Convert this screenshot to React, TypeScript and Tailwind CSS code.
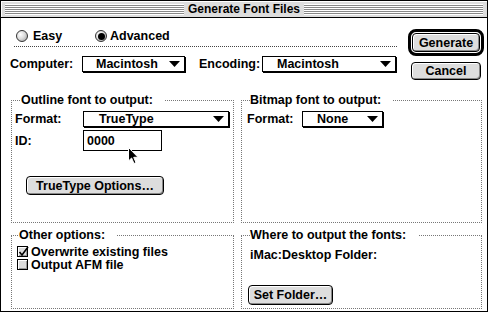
import React from "react";

function Radio({ checked }: { checked?: boolean }) {
  return (
    <span className="w-[12px] h-[12px] rounded-full border border-[#333] bg-[radial-gradient(circle_at_35%_35%,#fff_0,#ddd_45%,#999_100%)] flex items-center justify-center">
      {checked && <span className="w-[7px] h-[7px] rounded-full bg-black" />}
    </span>
  );
}

function Checkbox({ checked }: { checked?: boolean }) {
  return (
    <span className="relative w-[11px] h-[11px] border border-black bg-[#ddd] shadow-[inset_1px_1px_0_#fff,inset_-1px_-1px_0_#999]">
      {checked && (
        <svg className="absolute -left-px -top-[2px]" width="13" height="13" viewBox="0 0 13 13">
          <path d="M2.5 7 L5 10 L11 2" fill="none" stroke="#000" strokeWidth="1.6" />
        </svg>
      )}
    </span>
  );
}

function Arrow() {
  return (
    <svg width="11" height="6" viewBox="0 0 11 6">
      <polygon points="0,0 11,0 5.5,6" fill="#000" />
    </svg>
  );
}

function Popup({ className, text }: { className: string; text: string }) {
  return (
    <div className={"h-[16px] border border-black bg-white shadow-[1px_1px_0_#000] flex items-center justify-between pr-[4px] " + className}>
      <span>{text}</span>
      <Arrow />
    </div>
  );
}

function Button({ className, children }: { className: string; children: React.ReactNode }) {
  return (
    <div className={"rounded-[4px] border border-black bg-[#dddddd] shadow-[inset_1px_1px_0_#fff,inset_-1px_-1px_0_#888] flex items-center justify-center " + className}>
      {children}
    </div>
  );
}

function Cursor() {
  return (
    <svg className="absolute left-[44px] top-[16px]" width="12" height="18" viewBox="0 0 12 18">
      <path d="M0.5 0.5 L0.5 14 L3.6 11 L6 16.5 L8 15.6 L5.7 10.3 L10 10.3 Z" fill="#000" stroke="#fff" strokeWidth="1" />
    </svg>
  );
}

export default function App() {
  return (
    <div className="w-[491px] h-[316px] bg-white font-['Liberation_Sans',Arial,sans-serif] font-bold text-[12.5px] leading-[16px] text-black">
      <div className="w-[488px] h-[312px] border border-black bg-white flex flex-col overflow-hidden">
        {/* title bar */}
        <div className="h-[17px] shrink-0 border-b border-black bg-[#dddddd] shadow-[inset_1px_1px_0_#fff] flex items-center px-[4px] gap-[4px]">
          <div className="flex-1 h-[11px] bg-[repeating-linear-gradient(#fff_0_1px,#888_1px_2px)]" />
          <span className="text-[12px] leading-[14px]">Generate Font Files</span>
          <div className="flex-1 h-[11px] bg-[repeating-linear-gradient(#fff_0_1px,#888_1px_2px)]" />
        </div>

        {/* top controls */}
        <div className="flex shrink-0">
          <div className="ml-[9px] w-[389px]">
            <div className="mt-[10px] h-[16px] flex items-center">
              <div className="ml-[6px] w-[79px] flex items-center gap-[5px]">
                <Radio />
                <span>Easy</span>
              </div>
              <div className="flex items-center gap-[3px]">
                <Radio checked />
                <span>Advanced</span>
              </div>
            </div>
            <div className="mt-[2px] ml-[4px] w-[383px] border-t border-dotted border-[#444]" />
            <div className="mt-[9px] flex items-center">
              <span className="w-[72px]">Computer:</span>
              <Popup className="w-[103px] pl-[13px]" text="Macintosh" />
              <span className="ml-[14px] w-[63px]">Encoding:</span>
              <Popup className="w-[134px] pl-[14px]" text="Macintosh" />
            </div>
          </div>
          <div className="ml-[9px] mt-[11px] flex flex-col">
            <div className="w-[76px] h-[27px] rounded-[8px] border-[3px] border-black p-px">
              <Button className="w-full h-full">Generate</Button>
            </div>
            <Button className="mt-[6px] ml-[3px] w-[70px] h-[18px]">Cancel</Button>
          </div>
        </div>

        {/* group boxes */}
        <div className="mt-[12px] ml-[10px] flex gap-[7px] shrink-0">
          <fieldset className="w-[223px] h-[131px] border border-dotted border-[#777] pl-[3px]">
            <legend className="ml-[6px] pr-[12px] bg-white">Outline font to output:</legend>
            <div className="mt-[3px] flex items-center">
              <span className="w-[68px]">Format:</span>
              <Popup className="w-[146px] pl-[15px]" text="TrueType" />
            </div>
            <div className="mt-[3px] flex items-center">
              <span className="w-[68px]">ID:</span>
              <div className="relative w-[79px] h-[21px] border border-black flex items-center pl-[3px]">
                <span>0000</span>
                <Cursor />
              </div>
            </div>
            <Button className="mt-[25px] ml-[11px] w-[138px] h-[19px]">TrueType Options…</Button>
          </fieldset>
          <fieldset className="w-[241px] h-[131px] border border-dotted border-[#777] pl-[5px]">
            <legend className="ml-[3px] pr-[12px] bg-white">Bitmap font to output:</legend>
            <div className="mt-[3px] flex items-center">
              <span className="w-[55px]">Format:</span>
              <Popup className="w-[81px] pl-[14px]" text="None" />
            </div>
          </fieldset>
        </div>

        <div className="mt-[4px] ml-[10px] flex gap-[7px] shrink-0">
          <fieldset className="w-[223px] h-[82px] border border-dotted border-[#777] pl-[5px]">
            <legend className="ml-[2px] pr-[12px] bg-white">Other options:</legend>
            <div className="mt-[2px] h-[13px] flex items-center gap-[3px]">
              <Checkbox checked />
              <span>Overwrite existing files</span>
            </div>
            <div className="h-[13px] flex items-center gap-[3px]">
              <Checkbox />
              <span>Output AFM file</span>
            </div>
          </fieldset>
          <fieldset className="w-[241px] h-[82px] border border-dotted border-[#777] pl-[8px]">
            <legend className="pr-[12px] bg-white">Where to output the fonts:</legend>
            <div className="mt-[4px]">iMac:Desktop Folder:</div>
            <Button className="mt-[22px] -ml-[2px] w-[85px] h-[20px]">Set Folder…</Button>
          </fieldset>
        </div>
      </div>
    </div>
  );
}
